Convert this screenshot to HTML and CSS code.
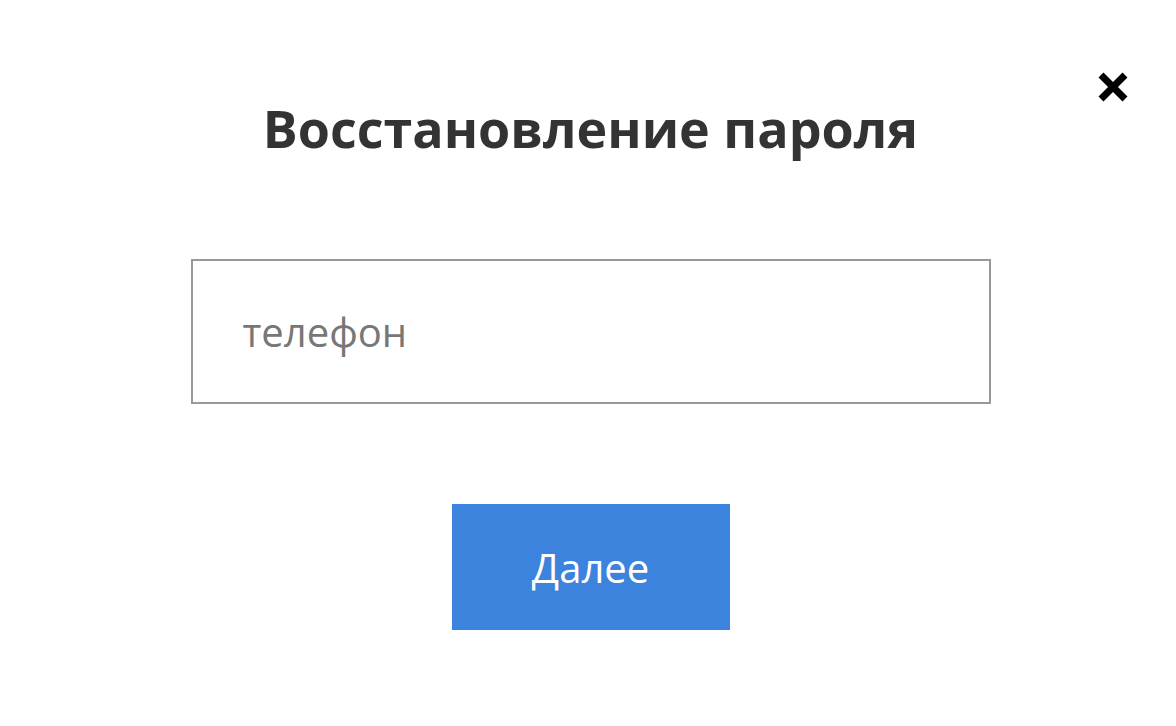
FILE: index.html
```html
<!DOCTYPE html>
<html lang="ru">
<head>
<meta charset="utf-8">
<link rel="stylesheet" href="styles.css">
</head>
<body>
<div class="modal">
  <button class="close" aria-label="Закрыть">
    <svg viewBox="0 0 32 32" width="32" height="32"><path d="M4 4 L28 28 M28 4 L4 28" stroke="#000" stroke-width="7" stroke-linecap="butt"/></svg>
  </button>
  <h1 class="title">Восстановление пароля</h1>
  <form class="form">
    <input class="field" type="text" placeholder="телефон">
    <button class="submit" type="button">Далее</button>
  </form>
</div>
</body>
</html>
```
FILE: styles.css
```css
html, body {
  margin: 0;
  padding: 0;
  background: #fff;
}
body {
  font-family: "Open Sans", "Liberation Sans", sans-serif;
  width: 1176px;
  height: 726px;
  overflow: hidden;
}
.modal {
  position: relative;
  display: flex;
  flex-direction: column;
  align-items: center;
  padding-top: 93px;
  padding-left: 5px;
}
.close {
  position: absolute;
  top: 71px;
  left: 1097px;
  width: 32px;
  height: 32px;
  padding: 0;
  border: 0;
  background: none;
  cursor: pointer;
}
.close svg { display: block; }
.title {
  margin: 0;
  font-size: 52px;
  font-weight: 700;
  color: #333;
  line-height: 70px;
  letter-spacing: 0;
}
.form {
  display: flex;
  flex-direction: column;
  align-items: center;
  margin-top: 96px;
}
.field {
  box-sizing: border-box;
  width: 800px;
  height: 145px;
  border: 2px solid #999;
  padding: 0 0 0 50px;
  font-family: "Open Sans", sans-serif;
  font-size: 40px;
  color: #333;
  outline: none;
}
.field::placeholder { color: #777; }
.submit {
  margin-top: 100px;
  width: 278px;
  height: 126px;
  border: 0;
  background: #3b83dc;
  color: #fff;
  font-family: "Open Sans", sans-serif;
  font-size: 40px;
}
```
